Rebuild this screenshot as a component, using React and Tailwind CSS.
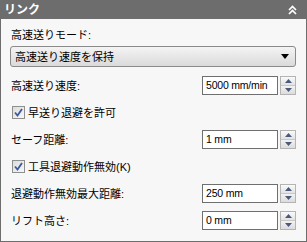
import React from 'react';

const font = { fontFamily: '"Liberation Sans", "Noto Sans CJK JP", sans-serif' };

const Spinner = () => (
  <div className="ml-[2px] flex h-[19px] w-[16px] flex-col border border-[#b4b4b4] bg-[#ececec]">
    <div className="flex flex-1 items-center justify-center border-b border-[#c8c8c8] bg-gradient-to-b from-[#fafafa] to-[#e2e2e2]">
      <svg width="7" height="4" viewBox="0 0 7 4">
        <path d="M0 4 L3.5 0 L7 4 Z" fill="#4b5a7c" />
      </svg>
    </div>
    <div className="flex flex-1 items-center justify-center bg-gradient-to-b from-[#f2f2f2] to-[#dcdcdc]">
      <svg width="7" height="4" viewBox="0 0 7 4">
        <path d="M0 0 L7 0 L3.5 4 Z" fill="#4b5a7c" />
      </svg>
    </div>
  </div>
);

const NumberRow = ({ label, value }) => (
  <div className="flex h-[27px] items-center">
    <span className="flex-1 pl-px text-[11px] leading-[14px] text-black">{label}</span>
    <div className="flex h-[19px] w-[76px] items-center overflow-hidden whitespace-nowrap border border-[#6f6f6f] bg-white pl-[3px] text-[10.5px] tracking-[-0.2px] text-black">
      {value}
    </div>
    <Spinner />
  </div>
);

const CheckRow = ({ label }) => (
  <div className="flex h-[27px] items-center pl-[2px]">
    <div className="flex h-[13px] w-[13px] items-center justify-center border border-[#8e8f8f] bg-gradient-to-br from-[#dcdcdc] to-[#f8f8f8]">
      <svg width="9" height="9" viewBox="0 0 9 9">
        <path d="M1 4.5 L3.5 7.5 L8 1" fill="none" stroke="#3c5a9a" strokeWidth="1.8" />
      </svg>
    </div>
    <span className="ml-[3px] text-[11px] leading-[14px] text-black">{label}</span>
  </div>
);

export default function App() {
  return (
    <div className="h-[242px] w-[307px] bg-white" style={font}>
      <div className="flex h-[19px] items-center justify-between bg-[#6d6d6d] pl-[4px] pr-[10px]">
        <span className="text-[12px] font-bold leading-[14px] text-white">リンク</span>
        <svg width="9" height="10" viewBox="0 0 9 10">
          <path d="M1 5 L4.5 1.5 L8 5 M1 9 L4.5 5.5 L8 9" fill="none" stroke="#ffffff" strokeWidth="1.7" />
        </svg>
      </div>
      <div className="h-[223px] border-x border-b border-[#6d6d6d] bg-[#f7f7f7] pl-[9px] pr-[10px] pt-[9px]">
        <div className="pl-px text-[11px] leading-[14px] text-black">高速送りモード:</div>
        <div className="mt-[4px] flex h-[21px] items-center justify-between rounded-[3px] border border-[#8a8a8a] bg-gradient-to-b from-[#f4f4f4] to-[#dadada] pl-[4px] pr-[6px]">
          <span className="text-[11px] leading-[14px] text-black">高速送り速度を保持</span>
          <svg width="8" height="5" viewBox="0 0 8 5">
            <path d="M0 0 L8 0 L4 5 Z" fill="#000000" />
          </svg>
        </div>
        <div className="mt-[5px]">
          <NumberRow label="高速送り速度:" value="5000 mm/min" />
          <CheckRow label="早送り退避を許可" />
          <NumberRow label="セーフ距離:" value="1 mm" />
          <CheckRow label="工具退避動作無効(K)" />
          <NumberRow label="退避動作無効最大距離:" value="250 mm" />
          <NumberRow label="リフト高さ:" value="0 mm" />
        </div>
      </div>
    </div>
  );
}
